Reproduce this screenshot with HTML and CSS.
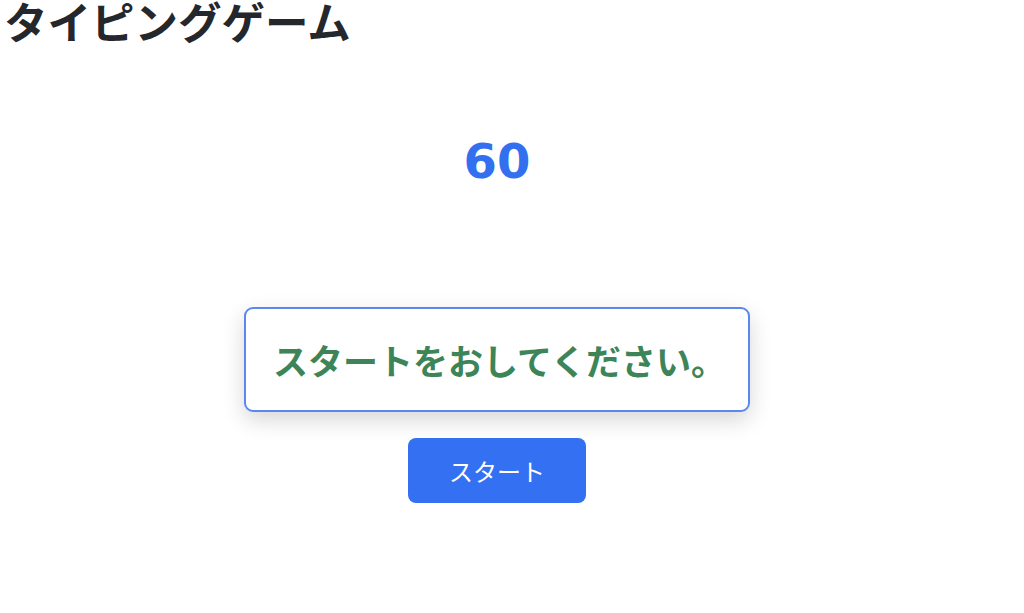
FILE: index.html
```html
<!DOCTYPE html>
<html lang="ja">
<head>
<meta charset="utf-8">
<link rel="stylesheet" href="styles.css">
</head>
<body>
<h1 class="title">タイピングゲーム</h1>
<main class="game">
  <div class="timer">60</div>
  <div class="word-box">スタートをおしてください。</div>
  <button class="start-btn">スタート</button>
</main>
</body>
</html>
```
FILE: styles.css
```css
html, body {
  margin: 0;
  padding: 0;
  background: #ffffff;
  font-family: "Noto Sans CJK JP", "Noto Sans", sans-serif;
}
.title {
  margin: 0;
  padding-left: 4px;
  font-size: 43.5px;
  line-height: 42px;
  font-weight: 600;
  color: #24272b;
}
.game {
  width: 994px;
  display: flex;
  flex-direction: column;
  align-items: center;
}
.timer {
  margin-top: 91px;
  font-family: "DejaVu Sans", "Liberation Sans", sans-serif;
  font-weight: 700;
  font-size: 48px;
  line-height: 56px;
  color: #3370f0;
}
.word-box {
  margin-top: 118px;
  box-sizing: border-box;
  width: 506px;
  height: 105px;
  padding: 0 0 0 27px;
  display: flex;
  align-items: center;
  white-space: nowrap;
  border: 2px solid #5a88f2;
  border-radius: 9px;
  box-shadow: 0 8px 22px rgba(0, 0, 0, 0.16);
  background: #fff;
  font-size: 35px;
  font-weight: 700;
  color: #3d8559;
}
.start-btn {
  margin-top: 26px;
  width: 178px;
  height: 65px;
  border: none;
  border-radius: 8px;
  background: #3370f2;
  color: #ffffff;
  font-family: "Noto Sans CJK JP", "Noto Sans", sans-serif;
  font-size: 24px;
  font-weight: 400;
}
```
